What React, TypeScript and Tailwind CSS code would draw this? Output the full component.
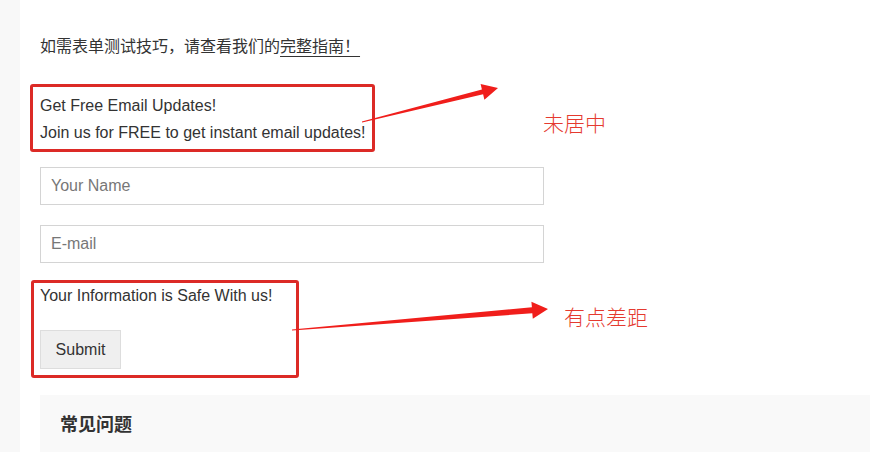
import React from "react";

const sans = "font-['Liberation_Sans','Noto_Sans_CJK_SC',sans-serif]";

export default function App() {
  return (
    <div className={`relative flex h-[452px] w-full overflow-hidden bg-white text-[16px] text-[#333] ${sans}`}>
      <div className="w-[20px] shrink-0 bg-[#f8f8f8]" />
      <div className="flex flex-1 flex-col pl-[20px] pt-[33px]">
        <p className="leading-[27px]">
          如需表单测试技巧，请查看我们的
          <a className="underline underline-offset-[4px]">完整指南！ </a>
        </p>

        <div className="mt-[32px] leading-[27px]">
          <p>Get Free Email Updates!</p>
          <p>Join us for FREE to get instant email updates!</p>
        </div>

        <form className="mt-[21px] flex flex-col">
          <input
            placeholder="Your Name"
            className="h-[38px] w-[504px] border border-[#d4d4d4] px-[10px] text-[16px] placeholder:text-[#777]"
          />
          <input
            placeholder="E-mail"
            className="mt-[20px] h-[38px] w-[504px] border border-[#d4d4d4] px-[10px] text-[16px] placeholder:text-[#777]"
          />
          <p className="mt-[19px] leading-[27px]">Your Information is Safe With us!</p>
          <button
            type="button"
            className="mt-[21px] h-[39px] w-[81px] border border-[#ddd] bg-[#efefef] text-[16px] text-[#333]"
          >
            Submit
          </button>
        </form>

        <div className="mt-[26px] flex-1 bg-[#f9f9f9] px-[20px] pt-[17px]">
          <h3 className="text-[18px] font-bold leading-[26px] text-[#333]">常见问题</h3>
        </div>
      </div>

      {/* annotations */}
      <div className="pointer-events-none absolute left-[30px] top-[84px] h-[68px] w-[345px] rounded-[3px] border-[3px] border-[#dc2a26]" />
      <div className="pointer-events-none absolute left-[31px] top-[280px] h-[98px] w-[268px] rounded-[3px] border-[3px] border-[#dc2a26]" />
      <svg className="pointer-events-none absolute left-0 top-0" width="870" height="452">
        <polygon
          fill="#f01e1b"
          points="361.9,121.5 481.9,89.5 480.6,84.1 498,88 484.4,99.7 483.1,94.3 362.1,122.5"
        />
        <polygon
          fill="#f01e1b"
          points="292,329.5 531.9,307.3 531.4,301.8 548,309 532.8,318.8 532.3,313.3 292,330.5"
        />
      </svg>
      <span className="absolute left-[543px] top-[110px] text-[21px] leading-[24px] text-[#e53a2f] font-['Noto_Sans_CJK_SC',sans-serif] font-light">
        未居中
      </span>
      <span className="absolute left-[564px] top-[304px] text-[21px] leading-[24px] text-[#e53a2f] font-['Noto_Sans_CJK_SC',sans-serif] font-light">
        有点差距
      </span>
    </div>
  );
}
